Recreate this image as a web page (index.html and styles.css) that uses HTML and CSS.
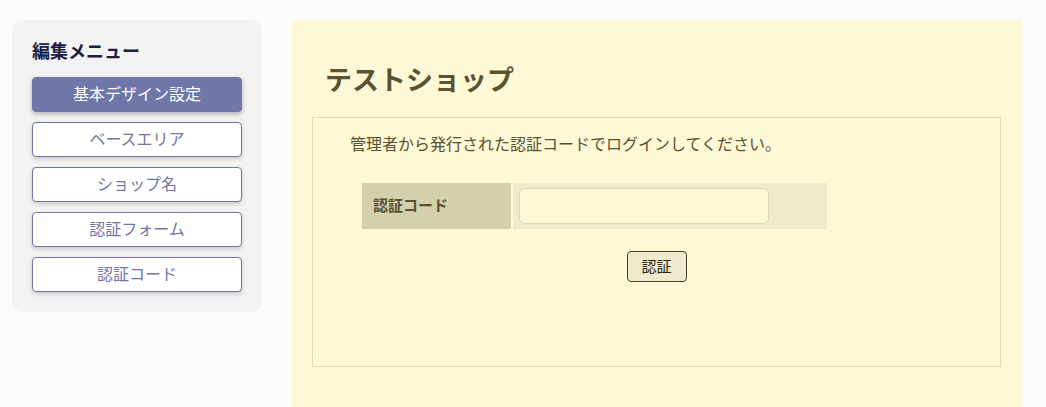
FILE: index.html
```html
<!DOCTYPE html>
<html lang="ja">
<head>
<meta charset="utf-8">
<title>テストショップ</title>
<link rel="stylesheet" href="styles.css">
</head>
<body>
<div class="page">
  <aside class="sidebar">
    <h2 class="side-title">編集メニュー</h2>
    <nav class="menu">
      <a class="menu-btn active">基本デザイン設定</a>
      <a class="menu-btn">ベースエリア</a>
      <a class="menu-btn">ショップ名</a>
      <a class="menu-btn">認証フォーム</a>
      <a class="menu-btn">認証コード</a>
    </nav>
  </aside>
  <main class="main">
    <h1 class="shop-title">テストショップ</h1>
    <section class="box">
      <p class="lead">管理者から発行された認証コードでログインしてください。</p>
      <div class="form-row">
        <div class="label-cell">認証コード</div>
        <div class="input-cell"><input class="code-input" type="text"></div>
      </div>
      <div class="actions"><button class="submit">認証</button></div>
    </section>
  </main>
</div>
</body>
</html>
```
FILE: styles.css
```css
html, body {
  margin: 0;
  padding: 0;
  background: #fcfcfc;
  font-family: "Noto Sans CJK JP", "Noto Sans", sans-serif;
}
.page {
  display: flex;
  align-items: flex-start;
  padding: 20px 0 0 12px;
  gap: 30px;
}
.sidebar {
  width: 250px;
  box-sizing: border-box;
  padding: 17px 20px 20px 20px;
  background: #f3f3f3;
  border-radius: 10px;
}
.side-title {
  margin: 0 0 14px 0;
  font-size: 18px;
  line-height: 26px;
  font-weight: 700;
  color: #1c1c44;
}
.menu {
  display: flex;
  flex-direction: column;
  gap: 10px;
}
.menu-btn {
  display: flex;
  align-items: center;
  justify-content: center;
  height: 35px;
  box-sizing: border-box;
  padding-bottom: 3px;
  border: 1px solid #6f76a8;
  border-radius: 4px;
  background: #ffffff;
  color: #6f76a8;
  font-size: 16px;
  box-shadow: 0 2px 4px rgba(0, 0, 0, 0.18);
}
.menu-btn.active {
  background: #6f76a8;
  color: #ffffff;
  box-shadow: 0 2px 5px rgba(0, 0, 0, 0.28);
}
.main {
  width: 730px;
  min-height: 400px;
  box-sizing: border-box;
  background: #fdf8d6;
  padding: 38px 21px 40px 20px;
}
.shop-title {
  margin: 0 0 17px 0;
  padding-left: 13px;
  font-size: 27px;
  line-height: 42px;
  font-weight: 700;
  color: #5c5230;
}
.box {
  height: 250px;
  box-sizing: border-box;
  border: 1px solid #e1dcb6;
  padding: 13px 20px 0 37px;
}
.lead {
  margin: 0 0 28px 0;
  font-size: 16px;
  line-height: 24px;
  color: #5a5030;
}
.form-row {
  display: flex;
  gap: 2px;
  margin-left: 12px;
  width: 465px;
  height: 46px;
}
.label-cell {
  width: 149px;
  box-sizing: border-box;
  background: #d4cfad;
  color: #5a5030;
  font-weight: 700;
  font-size: 15px;
  padding: 0 0 4px 11px;
  display: flex;
  align-items: center;
}
.input-cell {
  flex: 1;
  background: #efeacc;
  padding: 5px 6px;
}
.code-input {
  display: block;
  width: 250px;
  height: 36px;
  box-sizing: border-box;
  border: 1px solid #ddd8b5;
  border-radius: 5px;
  background: #fdf8d6;
  margin: 0;
}
.actions {
  display: flex;
  justify-content: center;
  margin-top: 22px;
  padding-right: 17px;
}
.submit {
  width: 60px;
  height: 31px;
  box-sizing: border-box;
  border: 1px solid #4a4020;
  border-radius: 4px;
  background: #efeacd;
  color: #2a2510;
  font-family: "Noto Sans CJK JP", sans-serif;
  font-size: 15px;
  padding: 0 0 3px 0;
}
```
